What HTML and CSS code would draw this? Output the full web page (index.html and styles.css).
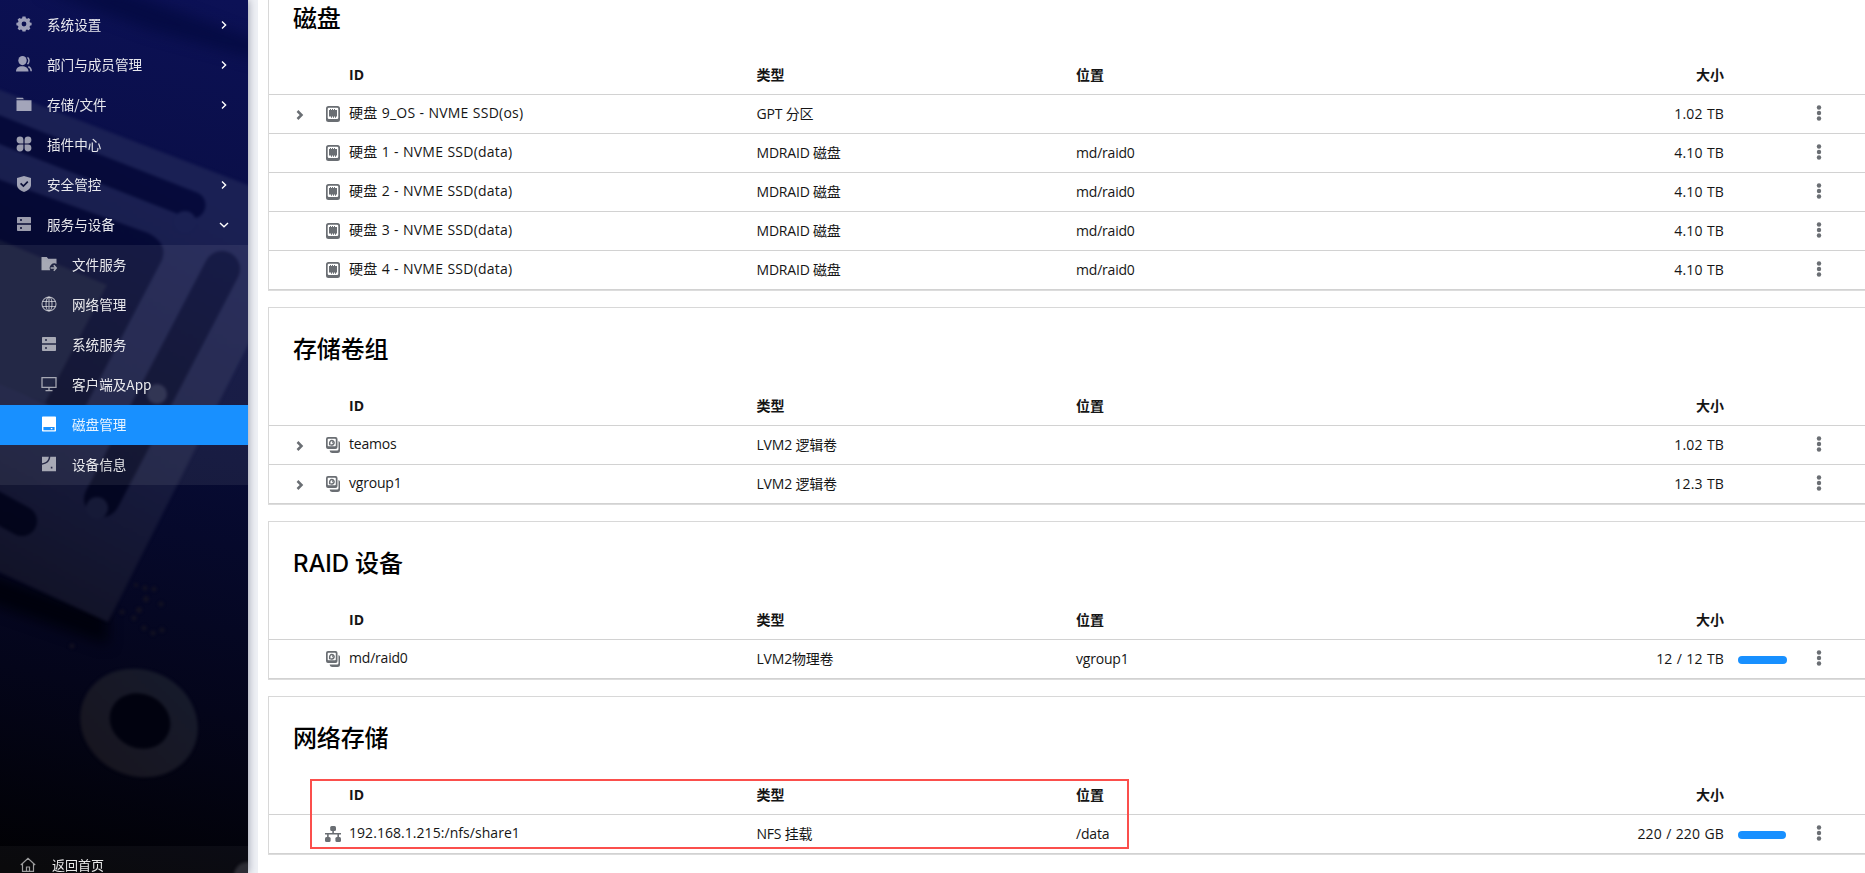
FILE: index.html
```html
<!DOCTYPE html>
<html lang="zh-CN">
<head>
<meta charset="utf-8">
<title>磁盘管理</title>
<link rel="stylesheet" href="styles.css">
</head>
<body>
<svg class="defs" width="0" height="0" aria-hidden="true">
  <symbol id="i-disk" viewBox="0 0 14 16"><path fill-rule="evenodd" d="M2.500 0h9A2.500 2.500 0 0 1 14 2.500v11a2.500 2.500 0 0 1-2.500 2.500h-9A2.500 2.500 0 0 1 0 13.500v-11A2.500 2.500 0 0 1 2.500 0zM3 1.700A1.300 1.300 0 0 0 1.700 3v8.700A1.300 1.300 0 0 0 3 13h8a1.300 1.300 0 0 0 1.300-1.300V3A1.300 1.300 0 0 0 11 1.700z"/><path d="M3 4h1V3h1v1h1V3h1v1h1V3h1v1h2v6.500h-1v1.200H9v-1.200H8v1.200H7v-1.200H6v1.200H5v-1.200H3z"/></symbol>
  <symbol id="i-volume" viewBox="0 0 14 16"><path fill-rule="evenodd" d="M2 0h7.500a2 2 0 0 1 2 2v8a2 2 0 0 1-2 2H2a2 2 0 0 1-2-2V2a2 2 0 0 1 2-2zM2.500 1.700a.8.8 0 0 0-.8.8v6a.8.8 0 0 0 .8.8H9a.8.8 0 0 0 .8-.8v-6a.8.8 0 0 0-.8-.8z"/><path d="M12.500 4A2 2 0 0 1 14 6v7.500a2.500 2.500 0 0 1-2.500 2.500H6a2.500 2.500 0 0 1-2.400-2.500h7.400a1.500 1.500 0 0 0 1.500-1.500z"/><path fill="none" stroke="currentColor" stroke-width="1.500" d="M3.700 8.300V6a2.200 2.200 0 1 1 2.300 2H4.500M6 5.500h.8"/></symbol>
  <symbol id="i-net" viewBox="0 0 16 16"><rect x="5.200" y="0" width="5.800" height="5" rx="1.500"/><rect x="0" y="11" width="5.600" height="5" rx="1.500"/><rect x="10.400" y="11" width="5.600" height="5" rx="1.500"/><path d="M7.300 4h1.600v3H16v1.600h-2V12h-1.600V8.600H3.700V12H2.100V8.600H0V7h7.300z"/></symbol>
  <symbol id="i-kebab" viewBox="0 0 6 16"><circle cx="3" cy="2.500" r="2.200"/><circle cx="3" cy="8" r="2.200"/><circle cx="3" cy="13.500" r="2.200"/></symbol>
  <symbol id="i-angle" viewBox="0 0 8 10"><path fill="none" stroke="currentColor" stroke-width="2.500" d="M1.500 1l4 4-4 4"/></symbol>
  <symbol id="i-right" viewBox="0 0 6 8"><path fill="none" stroke="currentColor" stroke-width="1.400" d="M1 .6L4.600 4 1 7.400"/></symbol>
  <symbol id="i-down" viewBox="0 0 10 6"><path fill="none" stroke="currentColor" stroke-width="1.400" d="M1 1l4 3.800L9 1"/></symbol>
  <symbol id="i-server" viewBox="0 0 16 16"><path fill-rule="evenodd" d="M1.800 1h12.400a.8.8 0 0 1 .8.8v5.400H1V1.800a.8.8 0 0 1 .8-.8zM4 3.200v1.600h2V3.200zM1 8.800h14v5.400a.8.8 0 0 1-.8.8H1.800a.8.8 0 0 1-.8-.8zM4 11.200v1.600h2v-1.600z"/></symbol>
</svg>
<div class="app">
  <nav class="sidebar">
    <svg class="backdrop" viewBox="0 0 248 873" preserveAspectRatio="none" color-interpolation-filters="sRGB" aria-hidden="true">
      <defs>
        <linearGradient id="base" x1="230" y1="0" x2="30" y2="873" gradientUnits="userSpaceOnUse"><stop offset="0" stop-color="#0c1156"/><stop offset=".5" stop-color="#070b34"/><stop offset=".78" stop-color="#04051a"/><stop offset="1" stop-color="#010103"/></linearGradient>
        <linearGradient id="plate" x1="220" y1="200" x2="10" y2="600" gradientUnits="userSpaceOnUse"><stop offset="0" stop-color="#1a2054"/><stop offset=".6" stop-color="#161a3e"/><stop offset="1" stop-color="#111225"/></linearGradient>
        <linearGradient id="slot" x1="220" y1="150" x2="20" y2="560" gradientUnits="userSpaceOnUse"><stop offset="0" stop-color="#060b40"/><stop offset="1" stop-color="#020418"/></linearGradient>
        <linearGradient id="ring" x1="160" y1="670" x2="120" y2="780" gradientUnits="userSpaceOnUse"><stop offset="0" stop-color="#161a2b"/><stop offset="1" stop-color="#17151f"/></linearGradient>
        <filter id="soft" x="-10%" y="-10%" width="120%" height="120%"><feGaussianBlur stdDeviation="1.500"/></filter>
        <filter id="haze" x="-30%" y="-60%" width="160%" height="220%"><feGaussianBlur stdDeviation="7"/></filter>
      </defs>
      <rect width="248" height="873" fill="url(#base)"/>
      <path d="M40-10L150 30 260 60V42L120-10z" fill="#050b44" filter="url(#haze)"/>
      <path d="M-20 570L108 615 108 645-20 600z" fill="#00010c" filter="url(#haze)"/>
      <g filter="url(#soft)">
        <path d="M-5 88L253 187V335L108 622-5 570z" fill="url(#plate)"/>
        <g stroke="url(#slot)" stroke-linecap="round" fill="none">
          <path stroke-width="27" d="M-20 122L192 205"/>
          <path stroke-width="36" d="M222 269L102 499"/>
          <path stroke-width="30" d="M-20 498L22 521"/>
        </g>
        <path d="M-5 178L148 233Q168 243 162 260L85 407 52 407-5 380z" fill="url(#slot)"/>
        <path d="M-5 238L107 285 45 403-5 382z" fill="#131838"/>
        <circle cx="185" cy="222" r="11" fill="#1a2052"/>
        <circle cx="157" cy="394" r="10" fill="#232748"/>
        <circle cx="97" cy="508" r="11" fill="#161a37"/>
        <g fill="#191622" opacity=".7"><circle cx="136" cy="585" r="2"/><circle cx="145" cy="588" r="2.500"/><circle cx="154" cy="589" r="2.500"/><circle cx="146" cy="599" r="3"/><circle cx="161" cy="604" r="2.500"/><circle cx="139" cy="610" r="3"/><circle cx="122" cy="612" r="2.500"/><circle cx="134" cy="618" r="2.500"/><circle cx="144" cy="628" r="2.500"/><circle cx="153" cy="633" r="2.500"/><circle cx="162" cy="630" r="2.500"/><circle cx="72" cy="646" r="2.500"/></g>
        <ellipse cx="139" cy="723" rx="60" ry="53" transform="rotate(25 139 723)" fill="url(#ring)"/>
        <ellipse cx="140" cy="721" rx="31" ry="27" transform="rotate(25 140 721)" fill="#01020f"/>
        <circle cx="248" cy="876" r="14" fill="#24242c"/>
      </g>
    </svg>
    <ul class="menu">
      <li class="item"><svg class="ico" viewBox="0 0 16 16"><path fill-rule="evenodd" d="M6.500.6h3l.4 1.700 1.200.5 1.600-.9 1.700 1.700-.9 1.700.5 1.200 1.600.3v2.400l-1.600.5-.5 1.200.9 1.600-1.800 1.800-1.600-.9-1.100.5-.4 1.700h-3l-.4-1.700-1.200-.5-1.600.9-1.700-1.800.9-1.600-.5-1.200L.4 9.200V6.800l1.600-.4.500-1.200-.9-1.600 1.800-1.700 1.600.9 1.100-.5zM8 5.600a2.400 2.400 0 1 0 0 4.800 2.400 2.400 0 0 0 0-4.800z"/></svg><span>系统设置</span><svg class="right"><use href="#i-right"/></svg></li>
      <li class="item"><svg class="ico" viewBox="0 0 16 16"><ellipse cx="6.500" cy="4.600" rx="4.200" ry="4.600"/><path d="M0 15.500c0-3.500 2.600-5.300 6-5.300s6.500 1.800 6.500 5.300z"/><path fill="none" stroke="currentColor" stroke-width="1.500" d="M11.500 1.300c2 1.500 2 5 0 6.800M12.300 10.600c2 .8 2.900 2.300 2.900 4.700"/></svg><span>部门与成员管理</span><svg class="right"><use href="#i-right"/></svg></li>
      <li class="item"><svg class="ico" viewBox="0 0 16 16"><path d="M.5 1.800h6.300L8 3.200H.5zM.5 4.200h15V15H.5z"/></svg><span>存储/文件</span><svg class="right"><use href="#i-right"/></svg></li>
      <li class="item"><svg class="ico" viewBox="0 0 16 16"><path d="M7.400 7.400H4A3.400 3.400 0 1 1 7.400 4zM8.600 7.400V4A3.400 3.400 0 1 1 12 7.400zM7.400 8.600V12A3.400 3.400 0 1 1 4 8.600zM8.600 8.600H12A3.400 3.400 0 1 1 8.600 12z"/></svg><span>插件中心</span></li>
      <li class="item"><svg class="ico" viewBox="0 0 16 16"><path d="M1 2l7-2 7 2v7c0 3.500-4 6-7 7-3-1-7-3.500-7-7z"/><path fill="none" stroke="#0b1038" stroke-width="1.700" d="M4.600 7.300l2.800 2.800 4.400-4.400"/></svg><span>安全管控</span><svg class="right"><use href="#i-right"/></svg></li>
      <li class="item"><svg class="ico"><use href="#i-server"/></svg><span>服务与设备</span><svg class="down"><use href="#i-down"/></svg></li>
    </ul>
    <ul class="menu sub">
      <li class="item"><svg class="ico" viewBox="0 0 16 16"><path d="M.5 1h5.300l1.400 1.700h8.300v5.200a4.700 4.700 0 0 0-6.300 6.300H.5z"/><path fill="none" stroke="currentColor" stroke-width="1.500" d="M9.600 12H15M12.800 9.200l2.500 2.800-2.500 2.800"/></svg><span>文件服务</span></li>
      <li class="item"><svg class="ico" viewBox="0 0 16 16"><g fill="none" stroke="currentColor" stroke-width="1.200"><circle cx="8" cy="8" r="7"/><ellipse cx="8" cy="8" rx="3" ry="7"/><path d="M1.500 5.500h13M1.500 10.500h13M8 1v14"/></g></svg><span>网络管理</span></li>
      <li class="item"><svg class="ico"><use href="#i-server"/></svg><span>系统服务</span></li>
      <li class="item"><svg class="ico" viewBox="0 0 16 16"><path fill="none" stroke="currentColor" stroke-width="1.300" d="M1 1.700h14v9.600H1zM8 11.300v3M4.500 14.700h7"/></svg><span>客户端及App</span></li>
      <li class="item active"><svg class="ico" viewBox="0 0 16 16"><path fill-rule="evenodd" d="M1.800.5h12.400a.8.8 0 0 1 .8.8v13.400a.8.8 0 0 1-.8.8H1.800a.8.8 0 0 1-.8-.8V1.300a.8.8 0 0 1 .8-.8zM2.400 11v3.200h11.200V11z"/><path d="M9.800 12h1.600v1.200H9.800z"/></svg><span>磁盘管理</span></li>
      <li class="item"><svg class="ico" viewBox="0 0 16 16"><path d="M1 .8h6.800C7.600 4.500 5 6.700 1 7.300z"/><path fill-rule="evenodd" d="M9.300.8H15v14.400H1V8.800c5-.8 8-3.500 8.300-8zM9.800 10.800v1.600h1.600v-1.600z"/></svg><span>设备信息</span></li>
    </ul>
    <div class="home"><svg class="ico" viewBox="0 0 16 16"><path fill="none" stroke="currentColor" stroke-width="1.200" d="M.8 8L8 1.300 15.200 8M2.500 6.800V14.400h11V6.800M6.500 14.400V10h3v4.400"/></svg><span>返回首页</span></div>
  </nav>
  <main class="content">
    <section class="card">
      <h2 class="title">磁盘</h2>
      <div class="row head"><span></span><span></span><span>ID</span><span>类型</span><span>位置</span><span class="size">大小</span></div>
      <div class="row"><svg class="toggle"><use href="#i-angle"/></svg><svg class="kind"><use href="#i-disk"/></svg><span class="id drive">硬盘 9_OS - NVME SSD(os)</span><span>GPT 分区</span><span></span><span class="size">1.02 TB</span><span></span><svg class="kebab"><use href="#i-kebab"/></svg></div>
      <div class="row"><span></span><svg class="kind"><use href="#i-disk"/></svg><span class="id drive">硬盘 1 - NVME SSD(data)</span><span>MDRAID 磁盘</span><span>md/raid0</span><span class="size">4.10 TB</span><span></span><svg class="kebab"><use href="#i-kebab"/></svg></div>
      <div class="row"><span></span><svg class="kind"><use href="#i-disk"/></svg><span class="id drive">硬盘 2 - NVME SSD(data)</span><span>MDRAID 磁盘</span><span>md/raid0</span><span class="size">4.10 TB</span><span></span><svg class="kebab"><use href="#i-kebab"/></svg></div>
      <div class="row"><span></span><svg class="kind"><use href="#i-disk"/></svg><span class="id drive">硬盘 3 - NVME SSD(data)</span><span>MDRAID 磁盘</span><span>md/raid0</span><span class="size">4.10 TB</span><span></span><svg class="kebab"><use href="#i-kebab"/></svg></div>
      <div class="row"><span></span><svg class="kind"><use href="#i-disk"/></svg><span class="id drive">硬盘 4 - NVME SSD(data)</span><span>MDRAID 磁盘</span><span>md/raid0</span><span class="size">4.10 TB</span><span></span><svg class="kebab"><use href="#i-kebab"/></svg></div>
    </section>
    <section class="card">
      <h2 class="title">存储卷组</h2>
      <div class="row head"><span></span><span></span><span>ID</span><span>类型</span><span>位置</span><span class="size">大小</span></div>
      <div class="row"><svg class="toggle"><use href="#i-angle"/></svg><svg class="kind"><use href="#i-volume"/></svg><span class="id">teamos</span><span>LVM2 逻辑卷</span><span></span><span class="size">1.02 TB</span><span></span><svg class="kebab"><use href="#i-kebab"/></svg></div>
      <div class="row"><svg class="toggle"><use href="#i-angle"/></svg><svg class="kind"><use href="#i-volume"/></svg><span class="id">vgroup1</span><span>LVM2 逻辑卷</span><span></span><span class="size">12.3 TB</span><span></span><svg class="kebab"><use href="#i-kebab"/></svg></div>
    </section>
    <section class="card">
      <h2 class="title">RAID 设备</h2>
      <div class="row head"><span></span><span></span><span>ID</span><span>类型</span><span>位置</span><span class="size">大小</span></div>
      <div class="row"><span></span><svg class="kind"><use href="#i-volume"/></svg><span class="id">md/raid0</span><span>LVM2物理卷</span><span>vgroup1</span><span class="size">12 / 12 TB</span><span class="usage" style="width:49px"></span><svg class="kebab"><use href="#i-kebab"/></svg></div>
    </section>
    <section class="card">
      <h2 class="title">网络存储</h2>
      <div class="row head"><span></span><span></span><span>ID</span><span>类型</span><span>位置</span><span class="size">大小</span></div>
      <div class="row"><span></span><svg class="kind net"><use href="#i-net"/></svg><span class="id share">192.168.1.215:/nfs/share1</span><span>NFS 挂载</span><span>/data</span><span class="size">220 / 220 GB</span><span class="usage" style="width:48px"></span><svg class="kebab"><use href="#i-kebab"/></svg></div>
      <div class="highlight"></div>
    </section>
  </main>
</div>
</body>
</html>
```
FILE: styles.css
```css
* { box-sizing: border-box; }
body { margin: 0; background: #fff; color: #151515; font: 14px/20px "Open Sans", "Noto Sans CJK SC", sans-serif; overflow: hidden; }
.defs { position: absolute; }
.app { display: flex; height: 873px; overflow: hidden; }
svg { fill: currentColor; }

.sidebar { position: relative; z-index: 1; flex: none; width: 248px; padding-top: 5px; display: flex; flex-direction: column; color: #fff; font-family: "Noto Sans CJK SC", sans-serif; font-size: 13.6px; box-shadow: 0 0 8px rgba(0, 10, 40, .4); }
.backdrop { position: absolute; inset: 0; width: 248px; height: 873px; z-index: -1; }
.menu { margin: 0; padding: 0; list-style: none; }
.item { height: 40px; display: flex; align-items: center; padding: 0 21px 2px 16px; }
.item span, .home span { opacity: .9; }
.ico { width: 16px; height: 16px; flex: none; margin-right: 15px; color: rgba(255, 255, 255, .6); }
.right { width: 6px; height: 8px; margin: 2px 0 0 auto; }
.down { width: 10px; height: 6px; margin: 2px -2px 0 auto; }
.sub { background: rgba(255, 255, 255, .07); }
.sub .item { padding-left: 41px; }
.sub .active { background: #1890ff; }
.active .ico { color: #fff; }
.home { flex: none; margin-top: auto; height: 27px; padding: 10px 0 0 20px; display: flex; background: rgba(255, 255, 255, .04); font-size: 13px; line-height: 17px; }
.home .ico { margin: 1px 16px 0 0; }

.content { flex: 1; min-width: 0; padding-left: 10px; border-left: 10px solid #eef0f5; }
.card { position: relative; margin-bottom: 17px; border: solid #d8d8d8; border-width: 1px 0 0 1px; box-shadow: 0 1px 0 #dcdcdc; }
.card:first-child { margin-top: -24px; }
.title { margin: 0; height: 79px; padding: 24px 0 0 24px; font-family: Inter, "Noto Sans CJK SC", sans-serif; font-size: 24px; line-height: 36px; font-weight: 500; letter-spacing: -.15px; color: #000; }
.row { display: grid; grid-template-columns: 48px 32px 407.5px 319.5px 448px 200px 64px 62px; align-items: center; height: 39px; border-bottom: 1px solid #d2d2d2; letter-spacing: -.2px; white-space: nowrap; }
.head { font-weight: 700; letter-spacing: 0; }
.id { padding-bottom: 2px; }
.drive { letter-spacing: .24px; word-spacing: .3px; }
.share { letter-spacing: .05px; }
.size { text-align: right; letter-spacing: .15px; word-spacing: .5px; }
.head .size { letter-spacing: 0; }
.toggle { width: 8px; height: 10px; margin: 1px 0 0 27px; color: #6a6e73; }
.kind { width: 14px; height: 16px; margin-left: 9px; color: #6a6e73; }
.net { width: 16px; margin-left: 8px; }
.kebab { width: 6px; height: 16px; justify-self: center; margin-top: -2px; color: #6a6e73; }
.usage { height: 8px; margin: 2px 0 0 14px; border-radius: 4px; background: #1890ff; }
.highlight { position: absolute; left: 41px; top: 82px; width: 819px; height: 70px; border: 2px solid #fb4f4c; }
```
